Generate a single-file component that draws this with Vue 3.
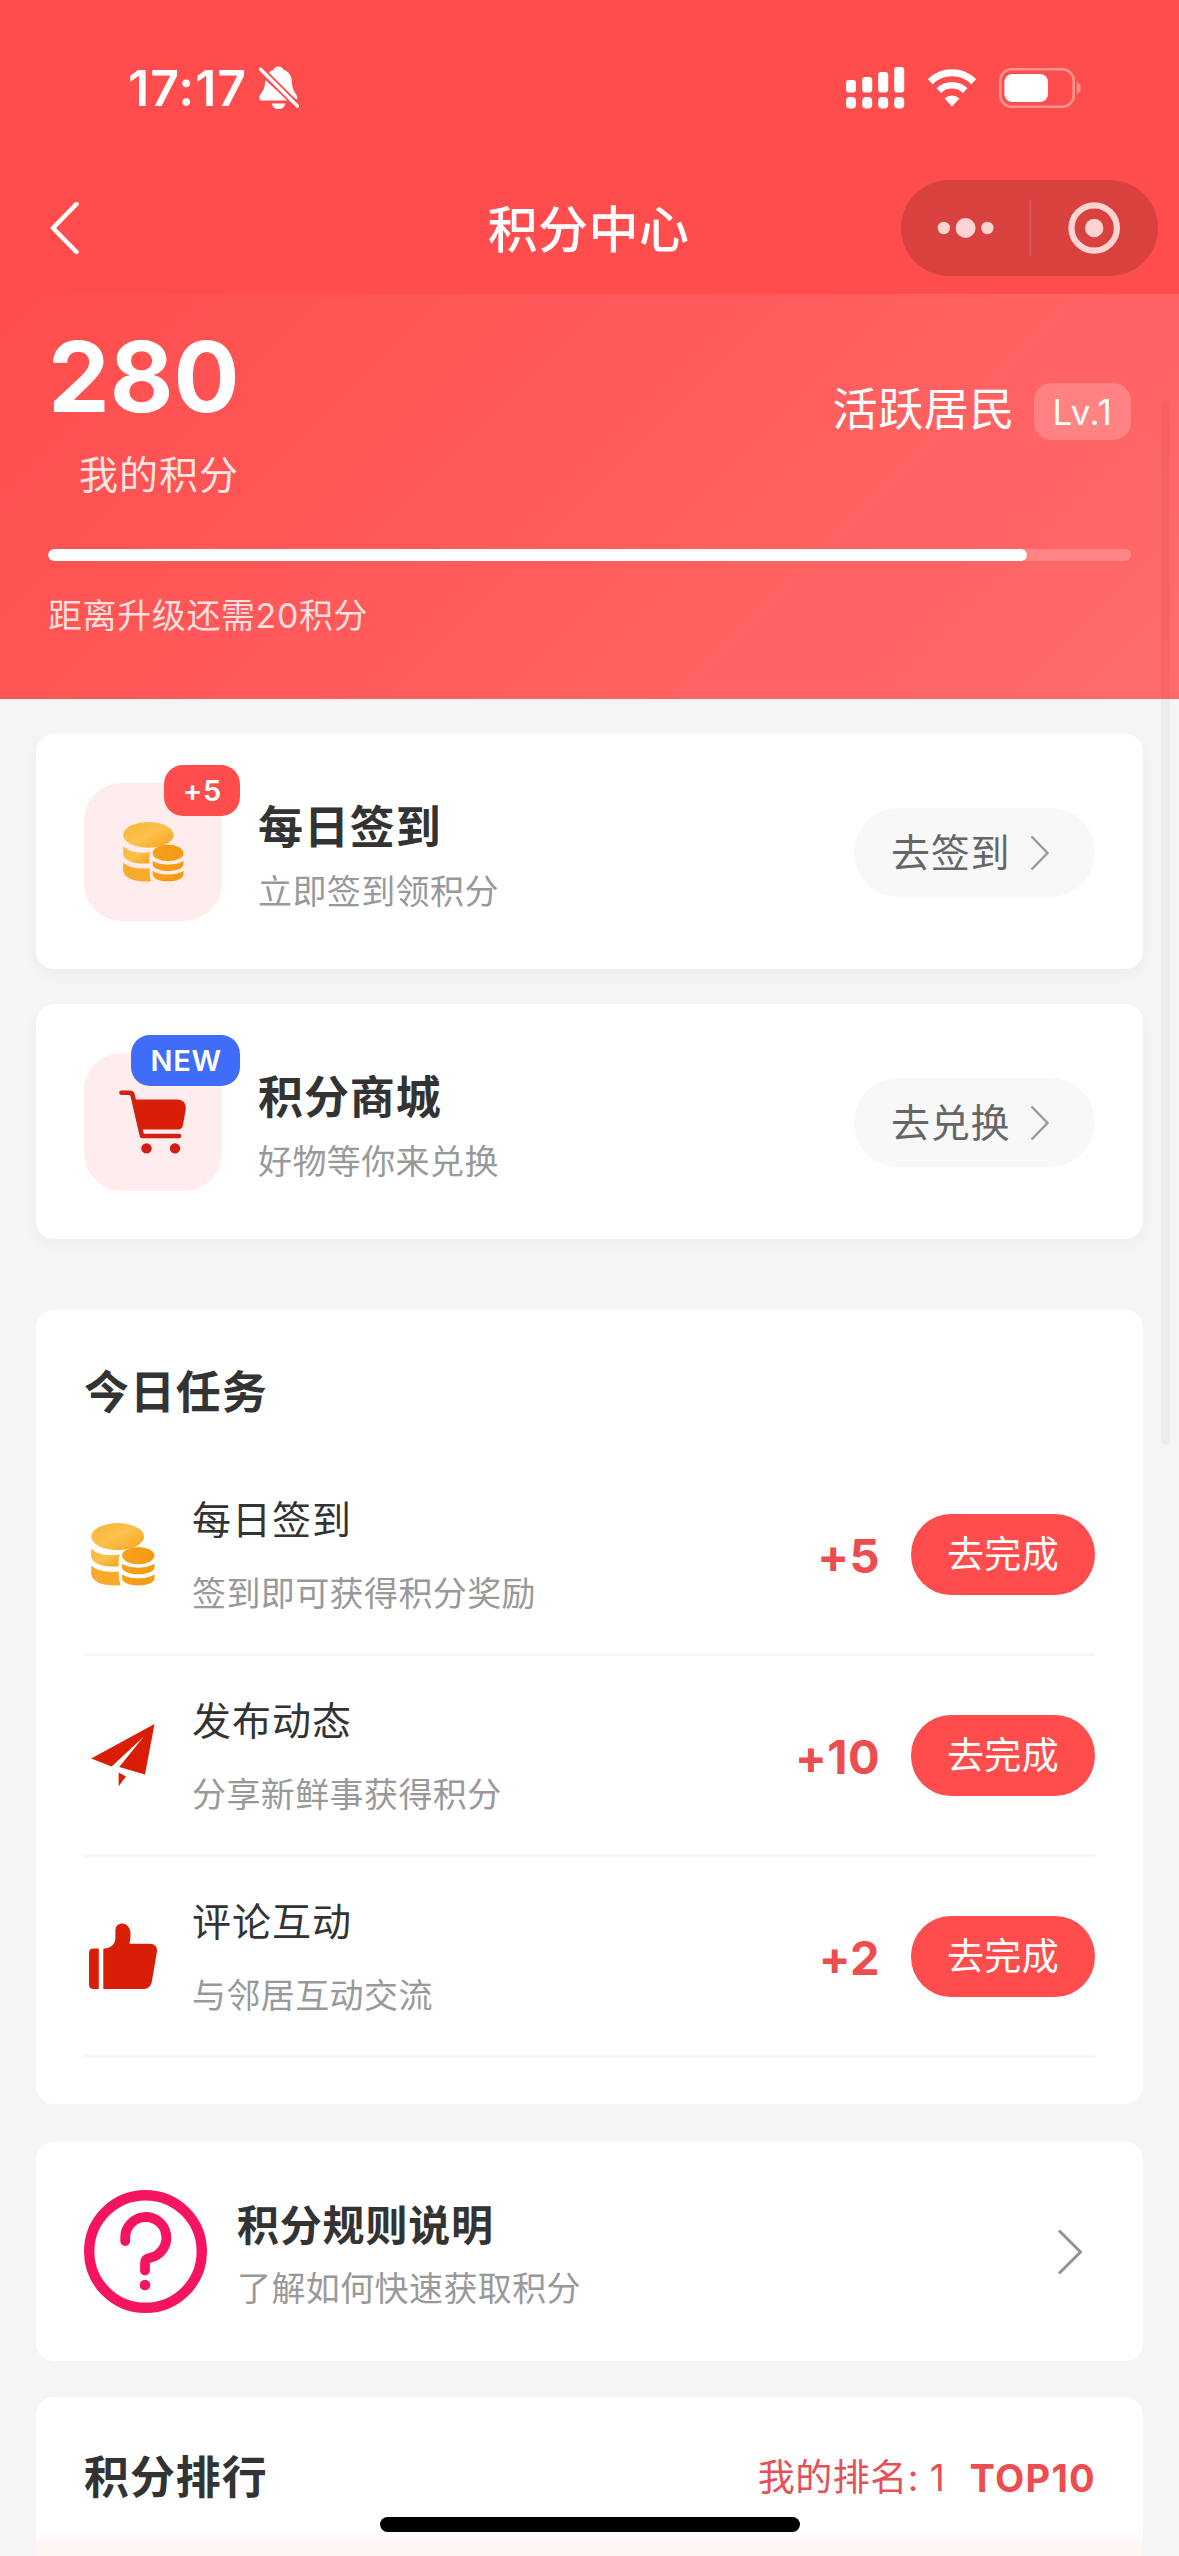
<script setup>
const actions = [
  { icon: 'coins', badge: '+5', tone: 'red', title: '每日签到', desc: '立即签到领积分', action: '去签到' },
  { icon: 'cart', badge: 'NEW', tone: 'blue', title: '积分商城', desc: '好物等你来兑换', action: '去兑换' },
]

const tasks = [
  { icon: 'coins', title: '每日签到', desc: '签到即可获得积分奖励', points: '+5' },
  { icon: 'plane', title: '发布动态', desc: '分享新鲜事获得积分', points: '+10' },
  { icon: 'thumb', title: '评论互动', desc: '与邻居互动交流', points: '+2' },
]

const progress = 90.4
</script>

<template>
  <div class="page">
    <svg class="defs" width="0" height="0" aria-hidden="true">
      <defs>
        <linearGradient id="goldBig" x1="0" y1="0" x2="1" y2="1">
          <stop offset="0" stop-color="#f8b63c" />
          <stop offset="0.5" stop-color="#fcc04c" />
          <stop offset="1" stop-color="#f5a31c" />
        </linearGradient>
        <linearGradient id="goldSmall" x1="0" y1="0" x2="1" y2="0">
          <stop offset="0" stop-color="#f9a01c" />
          <stop offset="1" stop-color="#f39a12" />
        </linearGradient>
      </defs>
      <symbol id="icon-coins" viewBox="0 0 64 63">
        <ellipse cx="26.7" cy="13.6" rx="26.5" ry="13.5" fill="url(#goldBig)" />
        <path d="M0.2 25.5C6 31.5 16 33.3 29 31.6C27.8 33.5 27.6 36 27.8 43.3C14 44.5 2.5 42 0.2 34Z" fill="url(#goldBig)" />
        <path d="M0.2 42.5C6 48 16 49.6 27.8 48.6C27.7 54 28 58 29.6 62.2C14 63.4 1.5 60 0.2 51Z" fill="#f8aa2a" />
        <ellipse cx="47.3" cy="32.6" rx="16.2" ry="8.6" fill="url(#goldSmall)" />
        <path d="M31.1 40.6C38 46 56.5 46 63.5 40.6V44.5C62.5 53.6 32 53.6 31.1 44.5Z" fill="url(#goldSmall)" />
        <path d="M31.1 51.2C38 56.6 56.5 56.6 63.5 51.2V55.2C62.5 64.8 32 64.8 31.1 55.2Z" fill="url(#goldSmall)" />
      </symbol>
      <symbol id="icon-cart" viewBox="0 0 68 64">
        <path d="M2.5 2.8H10.5Q13 2.8 13.6 5.2L23 46H60" fill="none" stroke="#d02015" stroke-width="4.6" stroke-linecap="round" stroke-linejoin="round" />
        <path d="M14.5 9.6H58Q67.4 10 66.8 19L64 35Q63 39.6 59 39.6H22Z" fill="#d81e06" />
        <circle cx="27.5" cy="58.4" r="5.2" fill="#d02015" />
        <circle cx="56" cy="58.4" r="5.2" fill="#d02015" />
      </symbol>
      <symbol id="icon-plane" viewBox="0 0 64 63">
        <path d="M63.5 0L0.2 34.5L20.5 42.6L52.5 13L28.2 43L54 50.5Z" fill="#d81e06" />
        <path d="M27.6 48.6L35 52.5L27.6 62.3Z" fill="#d81e06" />
      </symbol>
      <symbol id="icon-thumb" viewBox="0 0 68 66">
        <path d="M4.5 25.6H9.8V66H4.5Q0 66 0 61.5V30Q0 25.6 4.5 25.6Z" fill="#d81e06" />
        <path d="M14.3 66V25.8C22 25 26.4 21.5 26.4 15V7.5C26.6 -2.4 41.6 -2.4 41.6 11.5C41.6 15 40.6 18 40.6 20.8H61Q69 21.4 67.9 29L62.8 59Q61.2 66 55 66Z" fill="#d81e06" />
      </symbol>
    </svg>

    <header class="top">
      <div class="status">
        <span class="time">17:17</span>
        <svg class="bell" width="40" height="44" viewBox="0 0 40 44">
          <path d="M19.5 0.5C16.5 0.5 15 2 14.6 3.8C12 4.6 9.5 6.5 8 9.5L37.5 33.5C39 32 38.5 30.5 36.5 27.5C34 24 33 20 32.8 15C32.5 9 29 5 24.4 3.8C24 2 22.5 0.5 19.5 0.5Z" fill="#fff" />
          <path d="M6.2 14C6 20.5 5 24 2 27.5C-0.8 31 -0.3 34.6 3.5 34.6H29Z" fill="#fff" />
          <path d="M13 37.4H26C25.5 45 13.5 45 13 37.4Z" fill="#fff" />
          <path d="M1.2 2.8L38.8 40.4" stroke="#ff4d4d" stroke-width="7" />
          <path d="M1.6 3.2L38.4 40" stroke="#fff" stroke-width="3.4" stroke-linecap="round" />
        </svg>
        <div class="status-right">
          <svg width="59" height="42" viewBox="0 0 59 42" fill="#fff">
            <rect x="0" y="13" width="10" height="12.5" rx="3" />
            <rect x="16.2" y="10" width="10" height="15.5" rx="3" />
            <rect x="32.2" y="5" width="10" height="20.5" rx="3" />
            <rect x="48.2" y="0" width="10" height="25.5" rx="3" />
            <rect x="0" y="30" width="10" height="11.5" rx="4" />
            <rect x="16.2" y="30" width="10" height="11.5" rx="4" />
            <rect x="32.2" y="30" width="10" height="11.5" rx="4" />
            <rect x="48.2" y="30" width="10" height="11.5" rx="4" />
          </svg>
          <svg class="wifi" width="50" height="38" viewBox="0 0 50 38">
            <path d="M3.2 12.8A31 31 0 0 1 46.8 12.8" fill="none" stroke="#fff" stroke-width="7" />
            <path d="M11.8 21.6A19 19 0 0 1 38.2 21.6" fill="none" stroke="#fff" stroke-width="6.6" />
            <path d="M25 37.5L17.6 29.4A10.8 10.8 0 0 1 32.4 29.4Z" fill="#fff" />
          </svg>
          <svg class="battery" width="82" height="40" viewBox="0 0 82 40">
            <rect x="1.3" y="1.3" width="73.4" height="37.4" rx="11.5" fill="none" stroke="#ff9490" stroke-width="2.6" />
            <rect x="5.4" y="6" width="43.6" height="28" rx="8" fill="#fff" />
            <path d="M77.6 14C83 15.5 83 24.5 77.6 26Z" fill="#ff9490" />
          </svg>
        </div>
      </div>
      <nav class="nav">
        <svg class="back" width="30" height="52" viewBox="0 0 30 52">
          <path d="M26.5 2L3 26L26.5 50" fill="none" stroke="#fff" stroke-width="4.6" stroke-linecap="round" stroke-linejoin="round" />
        </svg>
        <h1 class="nav-title">积分中心</h1>
        <div class="capsule">
          <svg width="257" height="96" viewBox="0 0 257 96" fill="#fcd5d3">
            <circle cx="42.8" cy="48" r="6.2" />
            <circle cx="64.6" cy="48" r="10" />
            <circle cx="86.4" cy="48" r="6.2" />
            <rect x="128.6" y="20" width="1.6" height="56" fill="#e55a57" />
            <circle cx="193.2" cy="48" r="22.7" fill="none" stroke="#fcd5d3" stroke-width="6.2" />
            <circle cx="193.2" cy="48" r="9.2" />
          </svg>
        </div>
      </nav>
    </header>

    <section class="hero">
      <div class="hero-row">
        <div>
          <div class="score">280</div>
          <div class="score-label">我的积分</div>
        </div>
        <div class="level">
          <span class="level-name">活跃居民</span>
          <span class="level-tag">Lv.1</span>
        </div>
      </div>
      <div class="track"><div class="fill" :style="{ width: progress + '%' }"></div></div>
      <p class="hint">距离升级还需20积分</p>
    </section>

    <main class="content">
      <section v-for="a in actions" :key="a.title" class="card action">
        <div class="icon-box">
          <svg v-if="a.icon === 'coins'" width="61" height="60"><use href="#icon-coins" /></svg>
          <svg v-else class="cart" width="68" height="64"><use href="#icon-cart" /></svg>
          <span class="badge" :class="a.tone">{{ a.badge }}</span>
        </div>
        <div class="action-text">
          <h2 class="title">{{ a.title }}</h2>
          <p class="desc">{{ a.desc }}</p>
        </div>
        <div class="pill">
          <span>{{ a.action }}</span>
          <svg width="20" height="36" viewBox="0 0 20 36">
            <path d="M1.5 1.5L17.5 18L1.5 34.5" fill="none" stroke="#999" stroke-width="2.4" />
          </svg>
        </div>
      </section>

      <section class="card tasks">
        <h2 class="title section-title">今日任务</h2>
        <div v-for="t in tasks" :key="t.title" class="task">
          <div class="task-icon">
            <svg v-if="t.icon === 'thumb'" width="68" height="66"><use href="#icon-thumb" /></svg>
            <svg v-else width="64" height="63"><use :href="'#icon-' + t.icon" /></svg>
          </div>
          <div class="task-text">
            <h3 class="task-title">{{ t.title }}</h3>
            <p class="desc">{{ t.desc }}</p>
          </div>
          <span class="points">{{ t.points }}</span>
          <button class="btn">去完成</button>
        </div>
      </section>

      <section class="card rules">
        <svg width="123" height="123" viewBox="0 0 123 123" fill="none" stroke="#f4145f">
          <circle cx="61.5" cy="61.5" r="56.3" stroke-width="10.4" />
          <path d="M41.2 51V48A20.6 20.6 0 1 1 66 67.8Q61 68.6 61 73V80.5" stroke-width="9.8" stroke-linecap="round" stroke-linejoin="round" />
          <circle cx="61" cy="95" r="5.3" fill="#f4145f" stroke="none" />
        </svg>
        <div class="rules-text">
          <h2 class="rules-title">积分规则说明</h2>
          <p class="desc">了解如何快速获取积分</p>
        </div>
        <svg class="rules-arrow" width="26" height="46" viewBox="0 0 26 46">
          <path d="M2 1.5L23.5 23L2 44.5" fill="none" stroke="#949494" stroke-width="3" />
        </svg>
      </section>

      <section class="card rank">
        <div class="rank-head">
          <h2 class="title">积分排行</h2>
          <span class="my-rank">我的排名: 1</span>
          <span class="top-ten">TOP10</span>
        </div>
        <div class="rank-first"></div>
      </section>
    </main>

    <div class="scrollbar"></div>
    <div class="home-bar"></div>
  </div>
</template>

<style>
body {
  margin: 0;
  background: #f5f5f5;
}
</style>

<style scoped>
.page {
  position: relative;
  width: 1179px;
  height: 2556px;
  overflow: hidden;
  background: #f5f5f5;
  color: #333;
  font-family: Inter, "Noto Sans CJK SC", sans-serif;
}
h1,
h2,
h3,
p {
  margin: 0;
}
svg {
  display: block;
  flex: none;
}
.defs {
  position: absolute;
}

/* status bar and navigation */
.top {
  height: 294px;
  background: #ff4d4d;
}
.status {
  display: flex;
  align-items: center;
  height: 176px;
  padding: 0 98px 0 128px;
}
.time {
  width: 131px;
  color: #fff;
  font-size: 50px;
  font-weight: 600;
  line-height: 60px;
  letter-spacing: 1px;
}
.status-right {
  display: flex;
  align-items: center;
  margin-left: auto;
}
.wifi {
  margin-left: 22px;
}
.battery {
  margin-left: 22px;
}
.nav {
  display: grid;
  grid-template-columns: 1fr auto 1fr;
  align-items: center;
  height: 104px;
  padding: 0 21px 0 50px;
}
.nav-title {
  padding: 4px 31px 0 0;
  color: #fff;
  font-size: 50px;
  font-weight: 500;
  line-height: 60px;
  letter-spacing: 0.4px;
}
.capsule {
  justify-self: end;
  width: 257px;
  height: 96px;
  border-radius: 48px;
  background: #d9413f;
}

/* score header */
.hero {
  box-sizing: border-box;
  height: 405px;
  padding: 34px 48px 0;
  background: linear-gradient(135deg, #ff4d4d, #ff6b6b);
  color: #fff;
}
.hero-row {
  display: flex;
  align-items: flex-start;
  justify-content: space-between;
}
.score {
  font-size: 98px;
  font-weight: 700;
  line-height: 97px;
}
.score-label {
  margin-top: 23px;
  padding-left: 31px;
  color: rgba(255, 255, 255, 0.87);
  font-size: 39px;
  line-height: 54px;
  letter-spacing: 1px;
}
.level {
  display: flex;
  align-items: center;
  gap: 19px;
  margin-top: 55px;
}
.level-name {
  padding-bottom: 3px;
  font-size: 45px;
  line-height: 54px;
  letter-spacing: 0.6px;
}
.level-tag {
  width: 97px;
  height: 57px;
  border-radius: 18px;
  background: rgba(255, 255, 255, 0.2);
  font-size: 35px;
  line-height: 58px;
  letter-spacing: 0.8px;
  text-align: center;
}
.track {
  height: 12px;
  margin-top: 47px;
  border-radius: 6px;
  background: rgba(255, 255, 255, 0.2);
  overflow: hidden;
}
.fill {
  height: 100%;
  border-radius: 6px;
  background: #fff;
}
.hint {
  padding-top: 31px;
  color: rgba(255, 255, 255, 0.82);
  font-size: 34px;
  line-height: 48px;
  letter-spacing: 0.6px;
}

/* cards */
.content {
  padding: 35px 36px 0;
}
.card {
  box-sizing: border-box;
  border-radius: 18px;
  background: #fff;
}
.action {
  display: flex;
  align-items: center;
  height: 235px;
  margin-bottom: 35px;
  padding: 0 48px;
  box-shadow: 0 6px 18px rgba(0, 0, 0, 0.03);
}
.icon-box {
  position: relative;
  display: flex;
  align-items: center;
  justify-content: center;
  width: 138px;
  height: 138px;
  border-radius: 38px;
  background: #ffecec;
}
.badge {
  position: absolute;
  top: -18px;
  right: -18px;
  padding: 0 18px 0 19px;
  border-radius: 19px;
  color: #fff;
  font-size: 29px;
  font-weight: 600;
  line-height: 51px;
  letter-spacing: 0.8px;
}
.badge.red {
  background: #ff4d4d;
}
.badge.blue {
  background: #3f6df8;
}
.action-text {
  flex: 1;
  padding: 10px 0 0 36px;
}
.title {
  font-size: 45px;
  font-weight: 700;
  line-height: 62px;
  letter-spacing: 0.9px;
}
.desc {
  color: #999;
  font-size: 34px;
  line-height: 50px;
  letter-spacing: 0.4px;
}
.action .desc {
  margin-top: 8px;
}
.pill {
  display: flex;
  align-items: center;
  box-sizing: border-box;
  width: 241px;
  height: 89px;
  margin-top: 2px;
  padding-left: 37px;
  border-radius: 45px;
  background: #f8f8f8;
  color: #666;
  font-size: 39px;
  line-height: 60px;
  letter-spacing: 0.8px;
}
.pill span {
  width: 139px;
}

/* daily tasks */
.tasks {
  height: 794px;
  margin-top: 71px;
  padding: 52px 48px 0;
}
.section-title {
  margin-bottom: 31px;
}
.task {
  display: flex;
  align-items: center;
  box-sizing: border-box;
  height: 201px;
  border-bottom: 3px solid #f7f7f7;
}
.task-icon {
  display: flex;
  justify-content: center;
  width: 78px;
}
.task-text {
  flex: 1;
  padding: 4px 0 0 30px;
}
.task-title {
  margin-bottom: 23px;
  font-size: 39px;
  font-weight: 400;
  line-height: 52px;
  letter-spacing: 1px;
}
.points {
  margin-right: 31px;
  padding-top: 4px;
  color: #ee4d50;
  font-size: 47px;
  font-weight: 700;
  line-height: 60px;
  letter-spacing: 0.4px;
}
.btn {
  width: 184px;
  height: 81px;
  padding: 0;
  border: 0;
  border-radius: 40px;
  background: #ff4d4d;
  color: #fff;
  font-family: inherit;
  font-size: 37px;
  line-height: 82px;
  letter-spacing: 0.4px;
}

/* rules entry */
.rules {
  display: flex;
  align-items: center;
  height: 219px;
  margin-top: 38px;
  padding: 0 60px 0 48px;
}
.rules-text {
  flex: 1;
  padding: 8px 0 0 30px;
}
.rules-title {
  font-size: 42px;
  font-weight: 700;
  line-height: 56px;
  letter-spacing: 0.8px;
}
.rules .desc {
  margin-top: 10px;
}

/* ranking */
.rank {
  height: 240px;
  margin-top: 36px;
  overflow: hidden;
}
.rank-head {
  display: flex;
  align-items: center;
  box-sizing: border-box;
  height: 148px;
  padding: 14px 47px 0 48px;
}
.rank-head .title {
  flex: 1;
}
.my-rank {
  color: #e55058;
  font-size: 37px;
  line-height: 60px;
  letter-spacing: 0.5px;
}
.top-ten {
  margin-left: 24px;
  color: #ee4d50;
  font-size: 38px;
  font-weight: 700;
  line-height: 58px;
  letter-spacing: 1.3px;
}
.rank-first {
  height: 92px;
  margin-top: -14px;
  background: linear-gradient(180deg, #fff, #fff5f4 14px, #fff3f2);
}

.scrollbar {
  position: absolute;
  top: 400px;
  left: 1161px;
  width: 9px;
  height: 1045px;
  border-radius: 5px;
  background: rgba(0, 0, 0, 0.035);
}
.home-bar {
  position: absolute;
  left: 380px;
  bottom: 24px;
  width: 420px;
  height: 15px;
  border-radius: 8px;
  background: #000;
}
</style>
